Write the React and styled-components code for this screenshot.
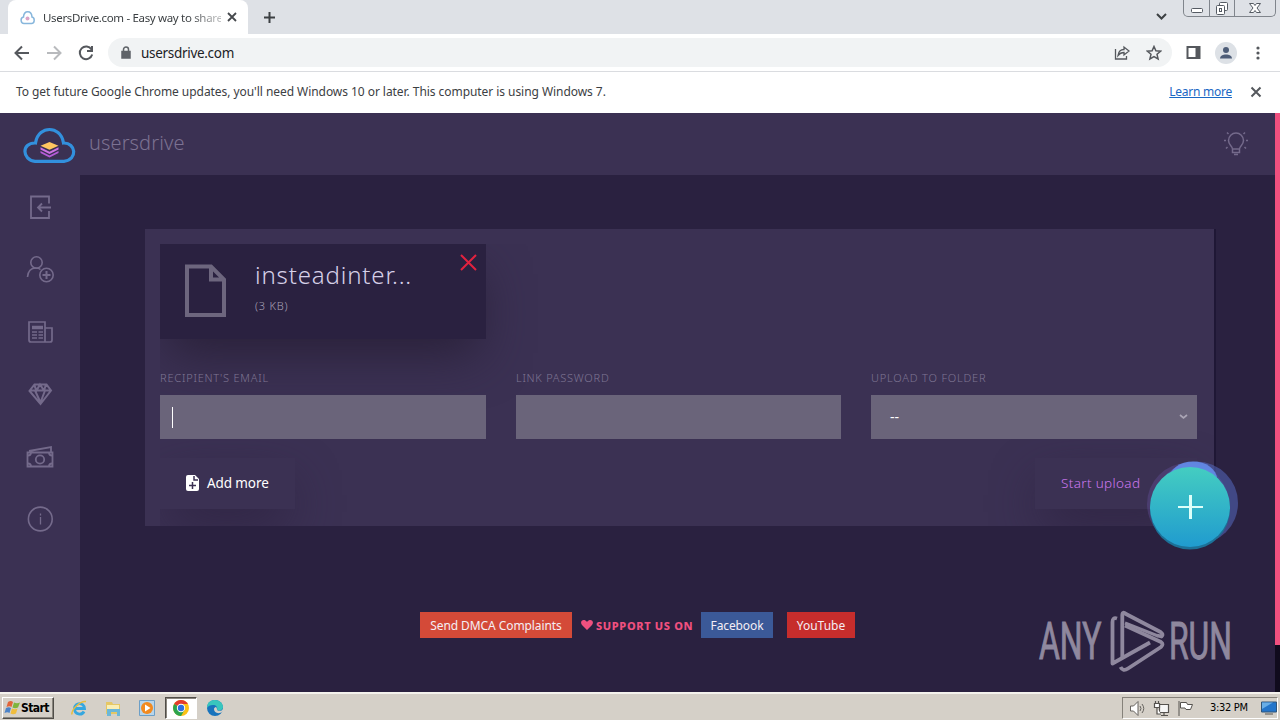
import styled, { createGlobalStyle, css } from "styled-components";

const Global = createGlobalStyle`
  * { box-sizing: border-box; }
  body { margin: 0; overflow: hidden; font-family: "Noto Sans", sans-serif; }
  svg { display: block; flex: none; }
`;

const Screen = styled.div`
  position: relative;
  display: flex;
  flex-direction: column;
  width: 1280px;
  height: 720px;
  overflow: hidden;
  background: #2a2140;
`;

/* ---------- browser ---------- */
const TabStrip = styled.div`
  display: flex;
  height: 34px;
  padding-left: 8px;
  background: #dee1e6;
`;

const Tab = styled.div`
  display: flex;
  align-items: center;
  width: 240px;
  height: 34px;
  padding: 0 9px 0 12px;
  background: #fff;
  border-radius: 8px 8px 0 0;
`;

const TabTitle = styled.div`
  width: 178px;
  margin: 0 6px 0 8px;
  white-space: nowrap;
  font-size: 11.5px;
  letter-spacing: -0.33px;
  color: #3c4043;
  mask-image: linear-gradient(90deg, #000 145px, rgba(0, 0, 0, 0.35) 174px);
`;

const NewTab = styled.div`
  display: flex;
  align-items: center;
  margin-left: 15px;
`;

const WindowTools = styled.div`
  display: flex;
  align-items: flex-start;
  margin-left: auto;
  gap: 16px;
  padding-right: 4px;
`;

const TabSearch = styled.div`
  padding-top: 12px;
`;

const WindowButtons = styled.div`
  display: flex;
  height: 17px;
  border: 1px solid #80858c;
  border-top: 0;
  border-radius: 0 0 5px 5px;
`;

const WindowButton = styled.div`
  display: flex;
  justify-content: center;
  width: ${({ $w }) => $w}px;
  & + & { border-left: 1px solid #80858c; }
`;

const Toolbar = styled.div`
  display: flex;
  align-items: center;
  height: 38px;
  padding: 0 12px 0 14px;
  background: #fff;
  border-bottom: 1px solid #dadce0;
`;

const NavIcons = styled.div`
  display: flex;
  gap: 16px;
`;

const AddressBar = styled.div`
  display: flex;
  align-items: center;
  width: 1064px;
  height: 29px;
  margin-left: 14px;
  padding: 0 10px 0 12px;
  border-radius: 15px;
  background: #f1f3f4;
`;

const Url = styled.div`
  flex: 1;
  margin-left: 9px;
  font-size: 13.5px;
  letter-spacing: -0.3px;
  color: #202124;
`;

const AddressActions = styled.div`
  display: flex;
  gap: 16px;
`;

const BrowserActions = styled.div`
  display: flex;
  align-items: center;
  gap: 13px;
  margin-left: 13px;
`;

const Avatar = styled.div`
  display: flex;
  align-items: center;
  justify-content: center;
  width: 22px;
  height: 22px;
  border-radius: 50%;
  background: #dde1e6;
`;

const InfoBar = styled.div`
  display: flex;
  align-items: center;
  height: 41px;
  padding: 0 18px 2px 16px;
  background: #fff;
  font-size: 12px;
  color: #3c4043;
`;

const InfoText = styled.div`
  flex: 1;
  letter-spacing: -0.055px;
`;

const LearnMore = styled.a`
  margin-right: 18px;
  letter-spacing: -0.25px;
  color: #1a67c4;
  text-decoration: underline;
`;

/* ---------- site ---------- */
const Site = styled.div`
  position: relative;
  display: flex;
  flex-direction: column;
  height: 579px;
  padding-right: 5px;
`;

const SiteHeader = styled.header`
  display: flex;
  align-items: center;
  height: 62px;
  padding: 0 26px 0 22px;
  background: #3b3153;
`;

const Brand = styled.div`
  flex: 1;
  margin: -3px 0 0 12px;
  font-size: 20px;
  font-weight: 300;
  letter-spacing: 0.1px;
  color: #7c7292;
`;

const Body = styled.div`
  display: flex;
  flex: 1;
`;

const Sidebar = styled.nav`
  display: flex;
  flex-direction: column;
  align-items: center;
  gap: 34.6px;
  width: 80px;
  padding-top: 17.5px;
  background: #3b3153;
`;

const Main = styled.main`
  flex: 1;
  padding: 54px 61px 0 65px;
`;

const Panel = styled.section`
  width: 1069px;
  height: 297px;
  padding: 15px 0 0 15px;
  background: #3b3153;
  box-shadow: 2px 0 0 #1f1735;
`;

const PanelContent = styled.div`
  height: 282px;
  padding-right: 17px;
  overflow: hidden;
`;

const FileCard = styled.div`
  display: flex;
  position: relative;
  width: 326px;
  height: 95px;
  padding: 20px 9px 0 24px;
  background: #2a2140;
  box-shadow: 0 22px 50px -8px #292038;
`;

const FileInfo = styled.div`
  flex: 1;
  margin-left: 28px;
`;

const FileName = styled.div`
  margin-top: -5px;
  font-size: 24px;
  font-weight: 300;
  line-height: 32px;
  letter-spacing: 0.85px;
  color: #d6d0e8;
`;

const FileSize = styled.div`
  margin-top: 7px;
  font-size: 11px;
  line-height: 16px;
  font-weight: 300;
  letter-spacing: 0.75px;
  color: #aaa3b8;
`;

const RemoveFile = styled.div`
  margin-top: -10px;
`;

const Fields = styled.div`
  display: grid;
  grid-template-columns: 326px 325px 326px;
  gap: 30px;
  position: relative;
  margin-top: 31px;
`;

const Label = styled.div`
  height: 25px;
  font-size: 11px;
  font-weight: 300;
  line-height: 16px;
  letter-spacing: ${({ $ls }) => $ls || 0}px;
  white-space: nowrap;
  color: #7f7693;
`;

const Input = styled.div`
  display: flex;
  align-items: center;
  justify-content: space-between;
  height: 44px;
  padding: 0 9px 0 ${({ $pad }) => $pad || 12}px;
  background: #6a647a;
  font-size: 14px;
  line-height: 40px;
  color: #fff;
`;

const Caret = styled.span`
  width: 1px;
  height: 21px;
  background: #fff;
`;

const Actions = styled.div`
  display: flex;
  justify-content: space-between;
  margin-top: 19px;
`;

const Action = styled.div`
  display: flex;
  align-items: center;
  gap: 7px;
  width: ${({ $w }) => $w}px;
  height: 51px;
  padding: 0 0 1px ${({ $pad }) => $pad || 25}px;
  background: #3b3153;
  box-shadow: 0 20px 50px -8px #2d2240;
  font-size: 13.5px;
  white-space: nowrap;
  letter-spacing: ${({ $ls }) => $ls || 0}px;
  ${({ $accent }) =>
    $accent
      ? css`color: #cd78ef; font-weight: 300;`
      : css`color: #fff;`}
`;

const Footer = styled.footer`
  display: flex;
  align-items: center;
  margin: 86px 0 0 275px;
  font-size: 12px;
`;

const Badge = styled.a`
  width: ${({ $w }) => $w}px;
  height: 26px;
  line-height: 27px;
  text-align: center;
  white-space: nowrap;
  letter-spacing: ${({ $ls }) => $ls || 0}px;
  background: ${({ $bg }) => $bg};
  color: #f4eef5;
  & + & { margin-left: 14px; }
`;

const Support = styled.div`
  display: flex;
  align-items: center;
  gap: 3px;
  width: 129px;
  padding-left: 9px;
  font-size: 11px;
  font-weight: 800;
  white-space: nowrap;
  letter-spacing: 0.65px;
  color: #f0507f;
`;

const ScrollTrack = styled.div`
  position: absolute;
  top: 0;
  right: 0;
  width: 5px;
  height: 579px;
  background: linear-gradient(#f0507f 532px, #100b1d 532px);
`;

const Fab = styled.div`
  position: absolute;
  left: 1143px;
  top: 346px;
`;

const Watermark = styled.div`
  position: absolute;
  left: 1036px;
  top: 493px;
`;

/* ---------- taskbar ---------- */
const Taskbar = styled.div`
  display: flex;
  align-items: center;
  height: 28px;
  padding: 2px 2px 0;
  background: #d5d0c8;
  border-top: 2px solid #f4f2ed;
  font-family: "DejaVu Sans Condensed", "DejaVu Sans", sans-serif;
  color: #000;
`;

const StartButton = styled.div`
  display: flex;
  align-items: center;
  width: 52px;
  height: 22px;
  padding-left: 1px;
  border: 1px solid;
  border-color: #fff #504d48 #504d48 #fff;
  box-shadow: inset -1px -1px #8a867e;
  font-size: 12px;
  font-weight: 700;
  letter-spacing: -0.6px;
`;

const Launcher = styled.div`
  display: flex;
  align-items: center;
  gap: 2px;
  margin-left: 9px;
`;

const Launch = styled.div`
  display: flex;
  align-items: center;
  justify-content: center;
  width: 32px;
  height: 22px;
  ${({ $active }) =>
    $active &&
    css`
      background: #fff;
      border: 1px solid;
      border-color: #504d48 #fff #fff #504d48;
      box-shadow: inset 1px 1px #8a867e;
    `}
`;

const Tray = styled.div`
  display: flex;
  align-items: center;
  gap: 7px;
  width: 156px;
  height: 22px;
  margin-left: auto;
  padding-left: 6px;
  border: 1px solid;
  border-color: #85817a #fff #fff #85817a;
`;

const Clock = styled.span`
  width: 42px;
  margin: -2px 2px 0 9px;
  font-size: 11px;
  letter-spacing: -0.3px;
  white-space: nowrap;
`;

/* ---------- icons ---------- */
function Icon({ size = 16, w, h, box, sw = 2, color = "#55585d", children }) {
  return (
    <svg
      width={w || size}
      height={h || size}
      viewBox={box || `0 0 ${w || size} ${h || size}`}
      fill="none"
      stroke={color}
      strokeWidth={sw}
    >
      {children}
    </svg>
  );
}

const side = "#746a8b";

function SideIcons() {
  return (
    <>
      <Icon size={28} color={side} sw={1.8}>
        <path d="M23 10.500V3.500H5V25h18V18M25 14.500H12M16 10.500l-4 4 4 4" />
      </Icon>
      <Icon size={28} color={side} sw={1.6}>
        <circle cx="10.500" cy="7.500" r="5.700" />
        <path d="M1.500 22c.5-6 4-9 8.500-9 2 0 3.500.6 4.500 1.500" />
        <circle cx="20.500" cy="20" r="6.700" />
        <path d="M20.500 16v8M16.500 20h8" strokeWidth="2" />
      </Icon>
      <Icon size={28} color={side} sw={1.7}>
        <path d="M3 4h16v20H5q-2 0-2-2zM19 10h7v12q0 2-2 2H18" />
        <path d="M6 9.500h11" strokeWidth="3.500" />
        <path d="M6 14h5M12.500 14H17M6 17h5M12.500 17H17M6 20h5M12.500 20H17" strokeWidth="1.600" />
      </Icon>
      <Icon size={28} color={side} sw={2}>
        <path d="M8.500 4.500h12l4.500 6L14.500 24 3.500 11zM3.500 10.500H25M9 10.500l5.500 12 4.500-12M8 4.500l2.500 6 3.500-6 4 6 2-6" />
      </Icon>
      <Icon size={28} color={side} sw={1.8}>
        <path d="M1.500 9.500h25v14h-25zM3 8l22-4V8.500" />
        <circle cx="14" cy="16.500" r="4.200" />
        <path d="M2 12.500q3 0 3-3M26 12.500q-3 0-3-3M2 20.500q3 0 3 3M26 20.500q-3 0-3 3" />
      </Icon>
      <Icon size={28} color={side} sw={1.6}>
        <circle cx="14.300" cy="14" r="11.900" />
        <path d="M14.500 12v7.500M14.500 8.500v2" strokeWidth="1.300" />
      </Icon>
    </>
  );
}

function CloudLogo() {
  return (
    <Icon w={55} h={40} sw={3.2} color="#3290dd">
      <path d="M13 37.300H42C56 36 54 18.500 41.500 19 40 9 33 5.500 27.500 5.500S15 9 13.500 19C-1 18.500 0 36 13 37.300Z" />
      <g stroke="none">
        <path d="M18.500 27l9 4.500 9-4.500v2l-9 4.500-9-4.500z" fill="#b65bd8" />
        <path d="M18.500 23.300l9 4.500 9-4.500v2.200l-9 4.500-9-4.500z" fill="#cd72e5" />
        <path d="M18.500 21.800l9-3.800 9 3.800-9 4z" fill="#ffc660" />
      </g>
    </Icon>
  );
}

function ChromeIcon() {
  return (
    <svg width="18" height="18" viewBox="0 0 18 18">
      <circle cx="9" cy="9" r="8" fill="#fbc116" />
      <path d="M9 9L2.100 5A8 8 0 0 1 15.900 5H9z" fill="#e33b2e" />
      <path d="M2.100 5A8 8 0 0 0 9 17l3.500-6L9 9z" fill="#2da44e" />
      <circle cx="9" cy="9" r="4.200" fill="#fff" />
      <circle cx="9" cy="9" r="3.200" fill="#2e6fdf" />
    </svg>
  );
}

function Launchers() {
  return (
    <Launcher>
      <Launch>
        <Icon size={18} sw={2.8} color="#36a7df">
          <path d="M5 9.500h9.500C14 3 5 3 4.500 9.500c0 6.500 7.500 7 9.500 3" />
          <path d="M2 15.500C1 11 10 1.500 16 2.500" stroke="#e8bd3e" strokeWidth="1.500" />
        </Icon>
      </Launch>
      <Launch>
        <svg width="18" height="18" viewBox="0 0 18 18">
          <path d="M2 3h6l1 2h7v10H2z" fill="#e5c765" />
          <path d="M3 6h12v4H3z" fill="#f9eeb5" />
          <path d="M3 10h13v7h-3v-4H7v4H3z" fill="#6cb7d8" />
        </svg>
      </Launch>
      <Launch>
        <svg width="18" height="18" viewBox="0 0 18 18">
          <path d="M1.500 1.500h15v15h-15z" fill="#b8d5ea" stroke="#6c9fc7" />
          <circle cx="9" cy="9" r="6" fill="#f28a1f" />
          <path d="M7 5.500v7L12.500 9z" fill="#fff" />
        </svg>
      </Launch>
      <Launch $active><ChromeIcon /></Launch>
      <Launch>
        <svg width="18" height="18" viewBox="0 0 18 18">
          <circle cx="9" cy="9" r="8" fill="#1873bc" />
          <path d="M1 9C1 3 5 1 9 1s8 3 8 7c0 3-3 4-6 3 1-3-1-5-4-5S2 7 1 9z" fill="#39c6bd" />
          <path d="M11 11c2 1.500 5 1 6-1v2c-4 4-9 2-9-2 0-1 1-2 2-2 1 1 1 2 1 3z" fill="#d5d0c8" />
        </svg>
      </Launch>
    </Launcher>
  );
}

function AnyRun() {
  return (
    <svg width="240" height="80" viewBox="0 0 240 80" fill="#8f889e" fontFamily="Roboto, sans-serif" fontSize="51">
      <g stroke="#8f889e" strokeWidth="1">
        <text transform="translate(3 53) scale(.67 1)" textLength="93" lengthAdjust="spacingAndGlyphs">ANY</text>
        <text transform="translate(133 53) scale(.67 1)" textLength="94" lengthAdjust="spacingAndGlyphs">RUN</text>
      </g>
      <g fill="none" stroke="#8f889e" strokeWidth="3.800" strokeLinejoin="round">
        <path d="M81 12.500Q76.500 11 76.500 16V57.500L114 36.500" />
        <path d="M86.300 52V9Q86.500 5 90 8L124.500 26Q128 28.500 125.500 30.500L121 29.500" />
        <path d="M89 19.500L125 36Q128 38 125 41L92 62.500Q87 66 84.500 61" />
        <path d="M89 17L122 30" strokeWidth="3" />
      </g>
    </svg>
  );
}

function PlusButton() {
  return (
    <svg width="98" height="94" viewBox="0 0 98 94">
      <defs>
        <linearGradient id="fab" x1="0" y1="0" x2="0" y2="1">
          <stop offset="0" stopColor="#44cdc1" />
          <stop offset="1" stopColor="#209bcf" />
        </linearGradient>
      </defs>
      <circle cx="45" cy="45" r="41" fill="#715bb0" opacity=".3" />
      <circle cx="53.500" cy="44" r="41.500" fill="#5262b4" opacity=".6" />
      <ellipse cx="50" cy="20" rx="24" ry="17.500" fill="#648ce9" opacity=".9" />
      <circle cx="47" cy="50.500" r="40" fill="#1c7198" />
      <circle cx="47" cy="48" r="40" fill="url(#fab)" />
      <path d="M47.500 36v24" stroke="#ddfff9" strokeWidth="3" />
      <path d="M35 48h25" stroke="#ddfff9" strokeWidth="2" />
    </svg>
  );
}

export default function App() {
  return (
    <Screen>
      <Global />
      <TabStrip>
        <Tab>
          <Icon size={15} sw={1.5} color="#87b6dc">
            <path d="M4 13.500h7.500c3.500 0 3.500-6 .5-6.500C11.500 0 4 0 3.500 7 0 7.500.5 13.500 4 13.500z" />
            <circle cx="7.500" cy="8.500" r="2" fill="#dba4c8" stroke="none" />
          </Icon>
          <TabTitle>UsersDrive.com - Easy way to share</TabTitle>
          <Icon size={10} sw={1.8} color="#45484c"><path d="M1 1l8 8M9 1L1 9" /></Icon>
        </Tab>
        <NewTab>
          <Icon size={13} color="#3c4043"><path d="M6.500 1v11M1 6.500h11" /></Icon>
        </NewTab>
        <WindowTools>
          <TabSearch><Icon w={11} h={9} color="#3c4043"><path d="M1 2l4.500 4.500L10 2" /></Icon></TabSearch>
          <WindowButtons>
            <WindowButton $w={25}>
              <Icon w={14} h={16} sw={1} color="#555b63"><rect x="1.500" y="8.500" width="11" height="4" rx="1" fill="#fff" /></Icon>
            </WindowButton>
            <WindowButton $w={25}>
              <Icon w={14} h={16} sw={1} color="#555b63">
                <rect x="4.500" y="2.500" width="8" height="8" rx="1" fill="#fff" />
                <rect x="1.500" y="5.500" width="8" height="9" rx="1" fill="#fff" />
                <rect x="4.500" y="8.500" width="2" height="3" />
              </Icon>
            </WindowButton>
            <WindowButton $w={41}>
              <Icon w={14} h={16} sw={1} color="#555b63">
                <path d="M1.500 3.500h4L7 5.500l1.500-2h4L9 8l3.500 4.500h-4L7 10.500l-1.500 2h-4L5 8z" fill="#fff" />
              </Icon>
            </WindowButton>
          </WindowButtons>
        </WindowTools>
      </TabStrip>

      <Toolbar>
        <NavIcons>
          <Icon><path d="M15 8H2M8 1.500L1.500 8 8 14.500" /></Icon>
          <Icon color="#b8babd"><path d="M1 8h13M8 1.500L14.500 8 8 14.500" /></Icon>
          <Icon><path d="M13.500 4.500A6.300 6.300 0 1 0 14.200 9.500M14 1v5H9" /></Icon>
        </NavIcons>
        <AddressBar>
          <Icon w={12} h={14} color="#5f6368" sw={1.5}>
            <rect x="2" y="5.500" width="8" height="6.500" fill="#5f6368" />
            <path d="M3.500 6V3.500a2.500 2.500 0 0 1 5 0V6" />
          </Icon>
          <Url>usersdrive.com</Url>
          <AddressActions>
            <Icon sw={1.3}><path d="M1.500 4v10h11v-3M4 10.500c.5-4 3-6 6-6V2l5 4-5 4V7.500c-3 0-4.500 1-6 3z" /></Icon>
            <Icon sw={1.5}><path d="M8 1.500l1.900 4.300 4.700.4-3.600 3.100 1.100 4.600L8 11.500l-4.100 2.400L5 9.300 1.400 6.200l4.700-.4z" /></Icon>
          </AddressActions>
        </AddressBar>
        <BrowserActions>
          <Icon w={17} h={16}><path d="M2.500 2h12v11h-12z" /><path d="M12.500 2v11" strokeWidth="4" /></Icon>
          <Avatar>
            <Icon size={14} color="none"><circle cx="7" cy="4" r="3" fill="#4e5d78" /><path d="M1 12.500C1 7 13 7 13 12.500z" fill="#4e5d78" /></Icon>
          </Avatar>
          <Icon w={16} color="none">
            <g fill="#55585d"><circle cx="8" cy="3" r="1.600" /><circle cx="8" cy="8" r="1.600" /><circle cx="8" cy="13" r="1.600" /></g>
          </Icon>
        </BrowserActions>
      </Toolbar>

      <InfoBar>
        <InfoText>To get future Google Chrome updates, you'll need Windows 10 or later. This computer is using Windows 7.</InfoText>
        <LearnMore>Learn more</LearnMore>
        <Icon size={12}><path d="M1.500 1.500l9 9M10.500 1.500l-9 9" /></Icon>
      </InfoBar>

      <Site>
        <SiteHeader>
          <CloudLogo />
          <Brand>usersdrive</Brand>
          <Icon size={26} sw={1.5} color={side}>
            <path d="M9.500 18c0-3-4-4-4-8.500a7.500 7.500 0 0 1 15 0c0 4.500-4 5.500-4 8.500zM9.500 18v3.500h7V18M11 23.500h4M1 9.500h2M23 9.500h2M4 1.500L5.500 3M22 1.500L20.500 3M3 17.500L4.500 16M23 17.500L21.500 16" />
          </Icon>
        </SiteHeader>
        <Body>
          <Sidebar><SideIcons /></Sidebar>
          <Main>
            <Panel>
              <PanelContent>
                <FileCard>
                  <Icon w={43} h={56} sw={4} color="#6d667e">
                    <path d="M3 2.500h24l13 13V51H3zM27 2.500v13h13" />
                  </Icon>
                  <FileInfo>
                    <FileName>insteadinter...</FileName>
                    <FileSize>(3 KB)</FileSize>
                  </FileInfo>
                  <RemoveFile>
                    <Icon size={18} color="#e3223f"><path d="M2 1l15 15M17 1L2 16" /></Icon>
                  </RemoveFile>
                </FileCard>
                <Fields>
                  <div>
                    <Label $ls={0.8}>RECIPIENT'S EMAIL</Label>
                    <Input><Caret /></Input>
                  </div>
                  <div>
                    <Label $ls={0.75}>LINK PASSWORD</Label>
                    <Input />
                  </div>
                  <div>
                    <Label $ls={0.8}>UPLOAD TO FOLDER</Label>
                    <Input $pad={19}>
                      --
                      <Icon w={9} h={6} sw={1.7} color="#aaa5b5"><path d="M1 1l3.500 3L8 1" /></Icon>
                    </Input>
                  </div>
                </Fields>
                <Actions>
                  <Action $w={135} $ls={-0.1}>
                    <svg width="15" height="18" viewBox="0 0 15 18">
                      <path d="M3 1h7l4 4v10q0 2-2 2H3q-2 0-2-2V3q0-2 2-2z" fill="#fff" />
                      <path d="M9 2v4h4M7.500 8v7M4 11.500h7" fill="none" stroke="#3b3153" strokeWidth="1.500" />
                    </svg>
                    Add more
                  </Action>
                  <Action $w={162} $pad={26} $ls={0.35} $accent>Start upload</Action>
                </Actions>
              </PanelContent>
            </Panel>
            <Footer>
              <Badge $w={152} $ls={-0.08} $bg="#d44a38">Send DMCA Complaints</Badge>
              <Support>
                <svg width="12" height="10" viewBox="0 0 12 10">
                  <path d="M6 10L1 5C-2 1 3-2 6 2 9-2 14 1 11 5z" fill="#f0507f" />
                </svg>
                SUPPORT US ON
              </Support>
              <Badge $w={72} $ls={-0.1} $bg="#3b5998">Facebook</Badge>
              <Badge $w={68} $bg="#c62d2c">YouTube</Badge>
            </Footer>
          </Main>
        </Body>
        <ScrollTrack />
        <Fab><PlusButton /></Fab>
        <Watermark><AnyRun /></Watermark>
      </Site>

      <Taskbar>
        <StartButton>
          <svg width="17" height="16" viewBox="0 0 17 16">
            <path d="M4 2q3-2 5 0L7.500 7q-2-1.500-5 0z" fill="#e2653b" />
            <path d="M10 2.500q3 1.500 6 0L14 7.500q-3 1.500-5.500 0z" fill="#7fb53e" />
            <path d="M2 8q3-1.500 5 0l-1.500 5q-2-1.500-5 0z" fill="#4c83c8" />
            <path d="M8 8.500q3 1.500 5.500 0l-1.500 5q-3 1.500-5.500 0z" fill="#f0bd3c" />
          </svg>
          Start
        </StartButton>
        <Launchers />
        <Tray>
          <Icon size={17} sw={1} color="#66635f">
            <path d="M1.500 6h3L9 1.500v14L4.500 11h-3z" fill="#fff" />
            <path d="M11 6q2 2.500 0 5M13 4q3.500 4.500 0 9" />
          </Icon>
          <Icon size={17} sw={1.2} color="#55524e">
            <path d="M6.500 4.500h9v8h-9zM8 15.500h7M11 13v2" fill="#f6f6f6" />
            <path d="M1.500 3.500h5v4h-5zM2.500 1v3M5.500 1v3M4 8v6h4" fill="#fff" />
          </Icon>
          <Icon size={17} sw={1} color="#55524e">
            <path d="M2 1v15M3.500 2.500h6l1 2h5l-2 5H9l-1-1.500H3.500z" fill="#fff" />
          </Icon>
          <Clock>3:32 PM</Clock>
          <svg width="16" height="14" viewBox="0 0 16 14">
            <path d="M.5 1h15v10H.5z" fill="#2475ca" stroke="#31567a" />
            <path d="M1 1.500h11L1 8z" fill="#69aee7" />
            <path d="M4 13h8" stroke="#55524e" />
          </svg>
        </Tray>
      </Taskbar>
    </Screen>
  );
}
